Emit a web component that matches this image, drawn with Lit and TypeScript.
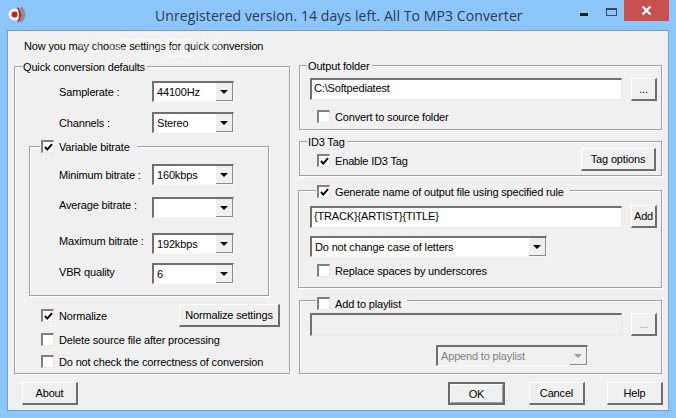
import { LitElement, html, css } from "lit";
import { customElement } from "lit/decorators.js";

const chk = (on: boolean) => html`<span class="cb">${on ? html`<svg width="9" height="9" viewBox="0 0 9 9"><path d="M1 4 L3.3 6.6 L8 1.2" fill="none" stroke="#000" stroke-width="2"/></svg>` : ""}</span>`;
const sel = (v: string, w = 82, off = false) => html`<span class="sel ${off ? "off" : ""}" style="width:${w}px"><span class="val">${v}</span><span class="arrow"><i></i></span></span>`;
const row = (label: string, v: string, off: number, mt: number) => html`<div class="frow" style="margin-top:${mt}px"><span class="flabel" style="margin-top:${off}px">${label}</span>${sel(v)}</div>`;
const check = (on: boolean, t: string) => html`<span class="check">${chk(on)}<span>${t}</span></span>`;

@customElement("app-root")
export class AppRoot extends LitElement {
  static styles = css`
    :host { display: block; width: 676px; height: 418px; overflow: hidden; background: #8cc5fa; position: relative;
      font: 11px/14px "Liberation Sans", Arial, sans-serif; letter-spacing: -0.16px; color: #000; }
    * { box-sizing: border-box; }
    .titlebar { height: 30px; display: flex; }
    .icon { margin: 6px 0 0 5px; width: 24px; height: 20px; flex: none; }
    .title { flex: none; font: 14px/20px "Open Sans", sans-serif; letter-spacing: 0.09px; color: #2b3a4c; padding: 6px 0 0 0; margin-left: 126px; white-space: nowrap; }
    .ctrls { display: flex; flex: none; margin: 0 7px 0 auto; height: 21px; }
    .min { width: 8px; height: 3px; background: #222; margin: 13px 18px 0 0; }
    .max { width: 11px; height: 8px; border: 1px solid #3a4a5c; border-top-width: 2px; margin: 8px 7px 0 0; }
    .close { width: 45px; height: 21px; background: #c75050; display: flex; align-items: center; justify-content: center; }
    .client { margin-left: 7px; width: 662px; height: 381px; border: 1px solid #6ba3dc; background: #f0f0f0; }
    .intro { margin: 8px 0 0 16px; height: 14px; }
    .cols { display: flex; margin-top: 12px; align-items: flex-start; }
    .left { margin: 1px 0 0 6px; width: 276px; }
    .right { margin-left: 9px; width: 363px; }
    .grp { position: relative; border: 1px solid #a0a0a0; box-shadow: 1px 1px 0 #fff, inset 1px 1px 0 #fff; }
    .lg { position: absolute; background: #f0f0f0; top: -7px; left: 7px; padding: 0 2px 0 1px; white-space: nowrap; display: flex; }
    .frow { display: flex; align-items: flex-start; }
    .flabel { width: 93px; flex: none; white-space: nowrap; }
    .sel { display: flex; flex: none; height: 21px; background: #fff; border-style: solid; border-width: 2px 1px 1px 2px; border-color: #707070 #f8f8f8 #f8f8f8 #707070; }
    .val { flex: 1; padding: 2px 0 0 3px; line-height: 15px; white-space: nowrap; overflow: hidden; }
    .arrow { width: 17px; flex: none; background: #f0f0f0; border-right: 1px solid #8a8a8a; border-bottom: 1px solid #8a8a8a; display: flex; align-items: center; justify-content: center; }
    .arrow i { width: 0; height: 0; border: 4px solid transparent; border-top-color: #000; border-bottom-width: 0; }
    .off { background: #f0f0f0; color: #808080; }
    .off .arrow i { border-top-color: #a0a0a0; }
    .input { height: 22px; width: 312px; flex: none; background: #fff; border-style: solid; border-width: 2px 1px 1px 2px; border-color: #707070 #e8e8e8 #e8e8e8 #707070; padding: 0 0 0 2px; line-height: 16px; white-space: nowrap; }
    .input.dis { background: #f0f0f0; height: 23px; }
    .btn { display: flex; align-items: center; justify-content: center; flex: none; background: #f0f0f0; height: 23px; border-style: solid; border-width: 1px 2px 2px 1px; border-color: #fff #6e6e6e #6e6e6e #fff; white-space: nowrap; }
    .btn.def { border: 2px solid #6a6a6a; box-shadow: inset 1px 1px 0 #fff, inset -1px -1px 0 #a0a0a0; }
    .btn.dis { color: #a0a0a0; }
    .cb { width: 13px; height: 13px; flex: none; background: #fff; border-style: solid; border-width: 2px 1px 1px 2px; border-color: #808080 #e8e8e8 #e8e8e8 #808080; display: flex; align-items: center; justify-content: center; }
    .check { display: inline-flex; align-items: center; gap: 5px; white-space: nowrap; height: 13px; }
    .rowf { display: flex; }
    .wm { position: absolute; left: 77px; top: 30px; font: bold 26px/36px "Liberation Sans", sans-serif; letter-spacing: 0; color: rgba(255,255,255,.36); pointer-events: none; }
    .footer { display: flex; margin-top: 8px; padding: 0 5px 0 14px; }
  `;

  render() {
    return html`
      <div class="titlebar">
        <svg class="icon" viewBox="0 0 24 20">
          <circle cx="9.5" cy="8.5" r="6" fill="#fff" opacity=".8"/>
          <path d="M15.5 1.5 Q22 8.5 15.5 16" fill="none" stroke="#8a8f94" stroke-width="3"/>
          <circle cx="9.5" cy="8.5" r="3" fill="#e01a10"/>
          <path d="M12.5 1.5 Q19.5 8.5 13 16 Q16.5 8.5 12.5 1.5Z" fill="#d81c0c" stroke="#d81c0c"/>
        </svg>
        <div class="title">Unregistered version. 14 days left. All To MP3 Converter</div>
        <div class="ctrls">
          <div class="min"></div><div class="max"></div>
          <div class="close"><svg width="11" height="9" viewBox="0 0 11 9"><path d="M1.5 .5 L9.5 8.5 M9.5 .5 L1.5 8.5" stroke="#fff" stroke-width="2.2" fill="none"/></svg></div>
        </div>
      </div>
      <div class="client">
        <div class="intro">Now you may choose settings for quick conversion</div>
        <div class="cols">
          <div class="left">
            <div class="grp" style="height:308px;padding-top:14px">
              <div class="lg">Quick conversion defaults</div>
              <div style="padding-left:44px">
                ${row("Samplerate :", "44100Hz", 4, 0)}
                ${row("Channels :", "Stereo", 4, 10)}
              </div>
              <div class="grp" style="margin:13px 0 0 14px;width:240px;height:150px;padding:17px 0 0 29px">
                <div class="lg" style="left:10px;padding-right:7px">${check(true, "Variable bitrate")}</div>
                ${row("Minimum bitrate :", "160kbps", 4, 0)}
                ${row("Average bitrate :", "", 1, 12)}
                ${row("Maximum bitrate :", "192kbps", 1, 15)}
                ${row("VBR quality", "6", 2, 9)}
              </div>
              <div style="display:flex;align-items:center;margin:8px 9px 0 26px;height:23px">
                ${check(true, "Normalize")}
                <span class="btn" style="width:101px;margin-left:auto">Normalize settings</span>
              </div>
              <div style="margin:6px 0 0 26px;height:13px">${check(false, "Delete source file after processing")}</div>
              <div style="margin:9px 0 0 26px;height:13px">${check(false, "Do not check the correctness of conversion")}</div>
            </div>
          </div>
          <div class="right">
            <div class="grp" style="height:65px;padding:12px 0 0 10px">
              <div class="lg">Output folder</div>
              <div class="rowf"><span class="input">C:\\Softpediatest</span><span class="btn" style="width:26px;margin-left:9px">...</span></div>
              <div style="margin:9px 0 0 7px;height:13px">${check(false, "Convert to source folder")}</div>
            </div>
            <div class="grp" style="height:35px;margin-top:11px;padding:6px 5px 0 17px;display:flex;justify-content:space-between">
              <div class="lg">ID3 Tag</div>
              <div style="margin-top:6px">${check(true, "Enable ID3 Tag")}</div>
              <span class="btn" style="width:75px">Tag options</span>
            </div>
            <div class="grp" style="height:98px;margin:14px 0 0 -1px;padding:15px 0 0 11px">
              <div class="lg" style="left:17px;top:-6px;padding-right:6px">${check(true, "Generate name of output file using specified rule")}</div>
              <div class="rowf"><span class="input">{TRACK}{ARTIST}{TITLE}</span><span class="btn" style="width:26px;margin:-1px 0 0 9px">Add</span></div>
              <div style="margin-top:8px">${sel("Do not change case of letters", 237)}</div>
              <div style="margin:7px 0 0 7px;height:13px">${check(false, "Replace spaces by underscores")}</div>
            </div>
            <div class="grp" style="height:74px;margin-top:12px;padding:12px 0 0 10px">
              <div class="lg" style="left:16px;top:-4px;padding-right:6px">${check(false, "Add to playlist")}</div>
              <div class="rowf"><span class="input dis"></span><span class="btn dis" style="width:26px;margin-left:9px">...</span></div>
              <div style="margin:9px 0 0 126px">${sel("Append to playlist", 152, true)}</div>
            </div>
          </div>
        </div>
        <div class="footer">
          <span class="btn" style="width:56px">About</span>
          <span class="btn def" style="width:57px;margin-left:auto">OK</span>
          <span class="btn" style="width:56px;margin-left:24px">Cancel</span>
          <span class="btn" style="width:56px;margin-left:22px">Help</span>
        </div>
      </div>
      <div class="wm">SOFTPEDIA</div>
    `;
  }
}
